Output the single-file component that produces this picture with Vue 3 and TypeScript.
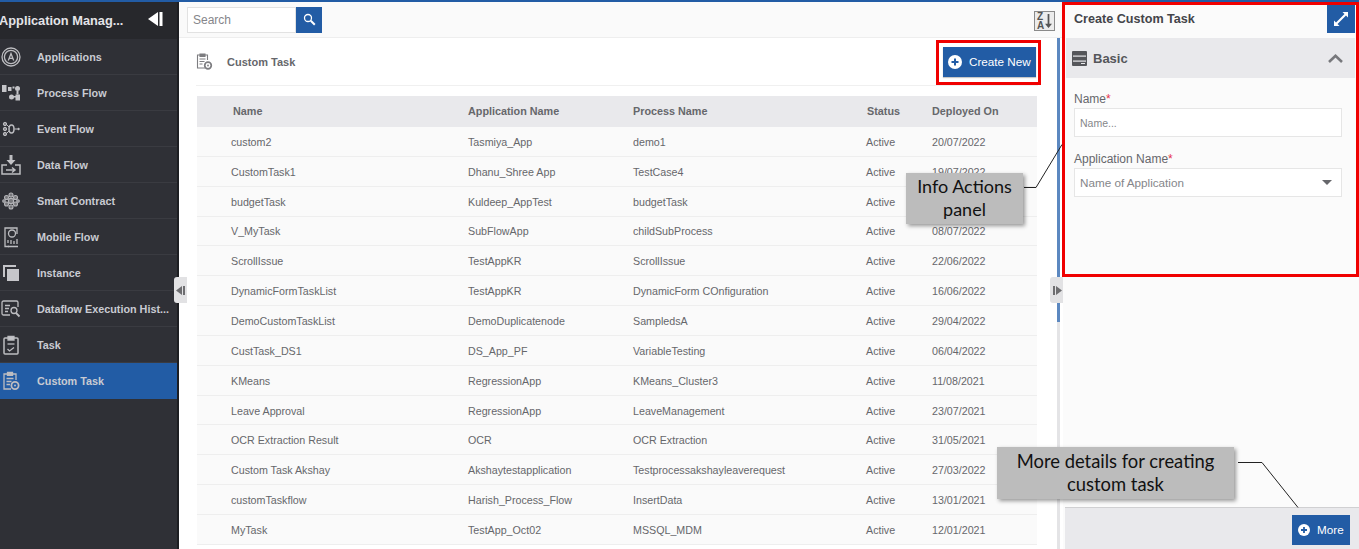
<script setup lang="ts">
// Custom Task screen: sidebar, task table, create panel and the two annotation callouts
interface TaskRow {
  name: string
  app: string
  process: string
  deployed: string
}

const menu = [
  { label: 'Applications', icon: 'apps' },
  { label: 'Process Flow', icon: 'process' },
  { label: 'Event Flow', icon: 'event' },
  { label: 'Data Flow', icon: 'data' },
  { label: 'Smart Contract', icon: 'contract' },
  { label: 'Mobile Flow', icon: 'mobile' },
  { label: 'Instance', icon: 'instance' },
  { label: 'Dataflow Execution Hist...', icon: 'history' },
  { label: 'Task', icon: 'task' },
  { label: 'Custom Task', icon: 'custom' },
]

const rows: TaskRow[] = [
  { name: 'custom2', app: 'Tasmiya_App', process: 'demo1', deployed: '20/07/2022' },
  { name: 'CustomTask1', app: 'Dhanu_Shree App', process: 'TestCase4', deployed: '19/07/2022' },
  { name: 'budgetTask', app: 'Kuldeep_AppTest', process: 'budgetTask', deployed: '14/07/2022' },
  { name: 'V_MyTask', app: 'SubFlowApp', process: 'childSubProcess', deployed: '08/07/2022' },
  { name: 'ScrollIssue', app: 'TestAppKR', process: 'ScrollIssue', deployed: '22/06/2022' },
  { name: 'DynamicFormTaskList', app: 'TestAppKR', process: 'DynamicForm COnfiguration', deployed: '16/06/2022' },
  { name: 'DemoCustomTaskList', app: 'DemoDuplicatenode', process: 'SampledsA', deployed: '29/04/2022' },
  { name: 'CustTask_DS1', app: 'DS_App_PF', process: 'VariableTesting', deployed: '06/04/2022' },
  { name: 'KMeans', app: 'RegressionApp', process: 'KMeans_Cluster3', deployed: '11/08/2021' },
  { name: 'Leave Approval', app: 'RegressionApp', process: 'LeaveManagement', deployed: '23/07/2021' },
  { name: 'OCR Extraction Result', app: 'OCR', process: 'OCR Extraction', deployed: '31/05/2021' },
  { name: 'Custom Task Akshay', app: 'Akshaytestapplication', process: 'Testprocessakshayleaverequest', deployed: '27/03/2022' },
  { name: 'customTaskflow', app: 'Harish_Process_Flow', process: 'InsertData', deployed: '13/01/2021' },
  { name: 'MyTask', app: 'TestApp_Oct02', process: 'MSSQL_MDM', deployed: '12/01/2021' },
]
</script>

<template>
  <div class="page">
    <div class="topline"></div>
    <div class="shell">
      <aside class="sidebar">
        <div class="side-head">
          <span class="side-title">Application Manag...</span>
          <svg class="side-toggle" width="16" height="14" viewBox="0 0 16 14">
            <path d="M1 7 11 0v14z" fill="#fff" />
            <rect x="12.500" y="0" width="3" height="14" fill="#fff" />
          </svg>
        </div>
        <div
          v-for="item in menu"
          :key="item.label"
          class="side-item"
          :class="{ active: item.icon === 'custom' }"
        >
          <svg class="side-icon" width="22" height="22" viewBox="0 0 22 22" fill="none" stroke="#bdbdc1" stroke-width="1.3">
            <template v-if="item.icon === 'apps'">
              <circle cx="11" cy="11" r="9" />
              <circle cx="11" cy="11" r="6.600" />
              <path d="M8.300 14.500 11 7.500l2.700 7M9.200 12.400h3.600" />
            </template>
            <template v-else-if="item.icon === 'process'">
              <g fill="#c4c4c8" stroke="none">
                <rect x="2" y="3" width="4.500" height="7" />
                <rect x="8" y="5" width="3.500" height="4" />
                <rect x="12.500" y="4.500" width="2" height="2" />
                <rect x="15" y="4" width="5" height="5" rx="2.500" />
                <rect x="9" y="12.500" width="5" height="5" rx="2.500" />
                <rect x="15.500" y="12.500" width="4.500" height="6" />
                <rect x="16.500" y="9" width="2" height="3.500" />
                <rect x="13" y="14" width="3" height="1.500" />
              </g>
            </template>
            <template v-else-if="item.icon === 'event'">
              <g fill="#8e8e92" stroke="#bdbdc1" stroke-width="1">
                <circle cx="5" cy="6" r="1.700" />
                <circle cx="5" cy="11" r="1.700" />
                <circle cx="5" cy="16" r="1.700" />
              </g>
              <path d="M6.500 6.500 9 9M6.500 15.500 9 13" stroke-width="1" />
              <ellipse cx="11.500" cy="11" rx="2.500" ry="4" stroke-width="1.500" />
              <path d="M14.500 11h3" stroke-width="1" />
              <circle cx="18.500" cy="11" r="1.200" fill="#bdbdc1" stroke="none" />
            </template>
            <template v-else-if="item.icon === 'data'">
              <path d="M11 1v6" stroke-width="3" />
              <path d="M6.500 6h9L11 11z" fill="#c4c4c8" stroke="none" />
              <path d="M7 11H2v9h18v-9h-5" stroke-width="1.500" />
              <path d="M6 16h9M12 13.500l3 2.500-3 2.500" stroke-width="1.500" />
            </template>
            <template v-else-if="item.icon === 'contract'">
              <g fill="#77777b" stroke="#b4b4b8" stroke-width="1.100">
                <circle cx="11" cy="5" r="2" />
                <circle cx="6.500" cy="7.500" r="2" />
                <circle cx="15.500" cy="7.500" r="2" />
                <circle cx="6.500" cy="14" r="2" />
                <circle cx="15.500" cy="14" r="2" />
                <circle cx="11" cy="17" r="2" />
                <circle cx="11" cy="11" r="2.600" />
                <circle cx="4" cy="11" r="1.300" />
                <circle cx="18" cy="11" r="1.300" />
              </g>
            </template>
            <template v-else-if="item.icon === 'mobile'">
              <path d="M9 20.500H5V2h12v6" />
              <circle cx="12" cy="7.500" r="3.500" />
              <path d="M8 17v-3M11 18v-4M14 18v-3M17 18v-5M8 20.500h10" />
            </template>
            <template v-else-if="item.icon === 'instance'">
              <path d="M3 15V3h13v2H5v10z" fill="#c4c4c8" stroke="none" />
              <rect x="7" y="7" width="12" height="12" fill="#c6c6ca" stroke="none" />
            </template>
            <template v-else-if="item.icon === 'history'">
              <path d="M10 17H3.500A1.500 1.500 0 0 1 2 15.500v-11A1.500 1.500 0 0 1 3.500 3h13A1.500 1.500 0 0 1 18 4.500V9" />
              <path d="M5 7.500h5M5 10.500h4M5 13.500h3" />
              <circle cx="14" cy="12.500" r="3" />
              <path d="m16 15 3.500 3.500" stroke-width="1.800" />
            </template>
            <template v-else-if="item.icon === 'task'">
              <rect x="4" y="4" width="14" height="16" rx="1" stroke-width="1.500" />
              <path d="M8 2.500h6V6H8z" fill="#c4c4c8" />
              <path d="M7.500 10h7" />
              <path d="m7.500 15 2 2 4.500-3.500" />
            </template>
            <template v-else>
              <path d="M11 19H4V4h12v6" />
              <path d="M7.500 2.500h5v2.800h-5z" fill="#bdbdc1" />
              <path d="M6.500 8.500h7M6.500 11.500h5M6.500 14.500h3.500" />
              <circle cx="15" cy="15.500" r="3.600" stroke-width="1.800" />
              <circle cx="15" cy="15.500" r="1" fill="#bdbdc1" stroke="none" />
            </template>
          </svg>
          <span class="side-label">{{ item.label }}</span>
        </div>
      </aside>

      <main class="main">
        <div class="toolbar">
          <div class="search">
            <span class="search-input">Search</span>
            <span class="search-btn">
              <svg width="13" height="13" viewBox="0 0 13 13" fill="none" stroke="#fff">
                <circle cx="5" cy="5" r="3.500" stroke-width="1.300" />
                <path d="m7.800 7.800 4 4" stroke-width="2" />
              </svg>
            </span>
          </div>
          <span class="sort-btn">
            <span class="sort-letters">Z<br />A</span>
            <svg width="7" height="16" viewBox="0 0 8 16">
              <path d="M3 0h2v11h3l-4 5-4-5h3z" fill="#555" />
            </svg>
          </span>
        </div>

        <div class="content">
          <div class="list">
            <div class="list-head">
              <span class="list-title">
                <svg width="17" height="19" viewBox="0 0 17 19" fill="none" stroke="#7d7d80" stroke-width="1.100">
                  <path d="M9 16H1.500V3h10v5" />
                  <path d="M4 2h5v2.500H4z" fill="#7d7d80" />
                  <path d="M3.500 7h6M3.500 9.500h5M3.500 12h3" />
                  <circle cx="12" cy="13.500" r="3.300" stroke-width="1.700" />
                  <circle cx="12" cy="13.500" r="0.900" fill="#7d7d80" stroke="none" />
                </svg>
                <span>Custom Task</span>
              </span>
              <button class="primary create">
                <svg width="14" height="14" viewBox="0 0 14 14">
                  <circle cx="7" cy="7" r="7" fill="#fff" />
                  <path d="M7 3.500v7M3.500 7h7" stroke="#225ca5" stroke-width="2" />
                </svg>
                Create New
              </button>
            </div>
            <div class="table">
              <div class="t-row t-header">
                <span class="h-name">Name</span>
                <span>Application Name</span>
                <span>Process Name</span>
                <span class="h-status">Status</span>
                <span>Deployed On</span>
              </div>
              <div v-for="row in rows" :key="row.name" class="t-row">
                <span>{{ row.name }}</span>
                <span>{{ row.app }}</span>
                <span>{{ row.process }}</span>
                <span>Active</span>
                <span>{{ row.deployed }}</span>
              </div>
            </div>
          </div>
          <div class="scroll-track"><div class="scroll-thumb"></div></div>
        </div>
        <span class="handle handle-left">
          <svg width="10" height="9" viewBox="0 0 10 9"><path d="M6 0v9L0 4.500z" fill="#6d6d70" /><rect x="7" width="2" height="9" fill="#6d6d70" /></svg>
        </span>
        <span class="handle handle-right">
          <svg width="10" height="9" viewBox="0 0 10 9"><rect x="1" width="2" height="9" fill="#6d6d70" /><path d="M4 0v9l6-4.500z" fill="#6d6d70" /></svg>
        </span>
      </main>

      <section class="panel">
        <div class="panel-head">
          <span class="panel-title">Create Custom Task</span>
          <span class="expand">
            <svg width="14" height="14" viewBox="0 0 14 14" fill="#fff">
              <path d="M8.500 0H14v5.500l-2-2-8.500 8.500 2 2H0V8.500l2 2L10.500 2z" />
            </svg>
          </span>
        </div>
        <div class="section-bar">
          <span class="section-name">
            <svg width="15" height="15" viewBox="0 0 15 15">
              <rect width="15" height="15" rx="1" fill="#55565a" />
              <rect x="1" y="4.500" width="13" height="1.200" fill="#e9e9ec" />
              <rect x="1" y="9.500" width="13" height="1.200" fill="#e9e9ec" />
              <rect x="9" y="12" width="4" height="1" fill="#e9e9ec" />
            </svg>
            Basic
          </span>
          <svg width="15" height="9" viewBox="0 0 15 9" fill="none" stroke="#77787c" stroke-width="2.600">
            <path d="m1 8 6.500-6.200L14 8" />
          </svg>
        </div>
        <div class="form">
          <label class="field-label">Name<em>*</em></label>
          <div class="field">Name...</div>
          <label class="field-label second">Application Name<em>*</em></label>
          <div class="field select">
            <span>Name of Application</span>
            <i class="caret"></i>
          </div>
        </div>
        <div class="panel-foot">
          <button class="primary more">
            <svg width="12" height="12" viewBox="0 0 12 12">
              <circle cx="6" cy="6" r="6" fill="#fff" />
              <path d="M6 3v6M3 6h6" stroke="#225ca5" stroke-width="1.800" />
            </svg>
            More
          </button>
        </div>
      </section>
    </div>

    <!-- annotations painted over the screenshot -->
    <div class="red-box box-create"></div>
    <div class="red-box box-panel"></div>
    <svg class="leaders" width="1359" height="549" fill="none" stroke="#222" stroke-width="1">
      <path d="M1024 187.500h12l26-43" />
      <path d="M1238 462.500h24l36 45" />
    </svg>
    <div class="callout callout-info">Info Actions<br />panel</div>
    <div class="callout callout-more">More details for creating<br />custom task</div>
  </div>
</template>

<style scoped>
.page {
  position: relative;
  display: flex;
  flex-direction: column;
  width: 1359px;
  height: 549px;
  overflow: hidden;
  background: #fff;
  font-family: 'Liberation Sans', Arial, sans-serif;
  font-size: 11px;
  color: #66676b;
}
.topline {
  height: 2px;
  flex: none;
  background: #225ca5;
}
.shell {
  display: flex;
  flex: 1;
  min-height: 0;
}

.sidebar {
  flex: none;
  width: 177px;
  background: #2f3036;
  border-right: 2px solid #1d1e22;
}
.side-head {
  display: flex;
  align-items: center;
  justify-content: space-between;
  height: 37px;
  padding-right: 14px;
  background: #27282c;
}
.side-title {
  font-size: 12.8px;
  font-weight: 700;
  color: #e4e4e8;
  margin-left: -1px;
  margin-top: -1px;
}
.side-toggle {
  margin-top: -4px;
}
.side-item {
  display: flex;
  align-items: center;
  height: 36px;
  border-bottom: 1px solid #3a3b41;
  box-sizing: border-box;
}
.side-item.active {
  background: #225ca5;
  border-bottom-color: #225ca5;
}
.side-icon {
  flex: none;
  margin: 0 15px 0 0;
}
.side-label {
  font-weight: 700;
  font-size: 10.8px;
  color: #c9cbd2;
  white-space: nowrap;
}

.main {
  position: relative;
  flex: none;
  width: 884px;
  display: flex;
  flex-direction: column;
  min-height: 0;
}
.toolbar {
  flex: none;
  display: flex;
  align-items: center;
  justify-content: space-between;
  height: 36px;
  padding: 0 8px;
  background: #fafafa;
  border-bottom: 1px solid #eeeeee;
  box-sizing: border-box;
}
.search {
  display: flex;
  height: 26px;
}
.search-input {
  width: 109px;
  line-height: 24px;
  padding-left: 5px;
  box-sizing: border-box;
  background: #fff;
  border: 1px solid #e2e2e2;
  font-size: 12px;
  color: #85868a;
}
.search-btn {
  display: flex;
  align-items: center;
  justify-content: center;
  width: 26px;
  background: #225ca5;
}
.sort-btn {
  display: flex;
  align-items: center;
  gap: 1px;
  width: 21px;
  height: 20px;
  padding-left: 2px;
  box-sizing: border-box;
  background: #ececec;
  border: 1px solid #8a8a8a;
  margin-top: 2px;
}
.sort-letters {
  font-size: 10px;
  font-weight: 700;
  line-height: 9px;
  color: #555;
}
.content {
  flex: 1;
  display: flex;
  min-height: 0;
  padding-left: 18px;
}
.list {
  width: 840px;
  flex: none;
}
.list-head {
  display: flex;
  align-items: center;
  justify-content: space-between;
  height: 48px;
  margin-left: -1px;
  margin-right: -1px;
  padding-right: 1px;
  box-sizing: border-box;
  border-bottom: 1px solid #f0f0f0;
}
.list-title {
  display: flex;
  align-items: center;
  gap: 14px;
  font-weight: 700;
  color: #66676b;
}
.primary {
  display: inline-flex;
  align-items: center;
  border: 0;
  background: #225ca5;
  color: #fff;
  font-family: inherit;
  font-size: 11.7px;
}
.create {
  width: 93px;
  height: 30px;
  gap: 7px;
  padding: 0 0 0 5px;
  margin-right: 1px;
  box-shadow: 0 1px 1px #c8c8c8;
}
.table {
  margin-top: 10px;
}
.t-row {
  display: grid;
  grid-template-columns: 237px 165px 233px 66px 1fr;
  align-items: center;
  height: 29.85px;
  padding: 1px 0 0 34px;
  box-sizing: border-box;
  background: #fafafa;
  border-bottom: 1px solid #eeeeee;
  font-size: 10.7px;
  white-space: nowrap;
}
.t-header {
  height: 31px;
  padding: 0 0 1px 34px;
  background: #e9e9ec;
  border-bottom: 0;
  font-weight: 700;
  font-size: 10.8px;
  color: #66676b;
}
.h-name {
  padding-left: 2px;
}
.h-status {
  padding-left: 1px;
}
.scroll-track {
  flex: none;
  width: 3px;
  margin-left: 20px;
  background: #e4e4e6;
}
.scroll-thumb {
  height: 284px;
  background: #5c88c0;
}
.handle {
  position: absolute;
  top: 275px;
  display: flex;
  align-items: center;
  justify-content: center;
  width: 13px;
  height: 26px;
  background: #e2e2e4;
}
.handle-left {
  left: -5px;
  border-radius: 3px 0 0 3px;
}
.handle-right {
  right: 0;
  border-radius: 3px 0 0 3px;
}

.panel {
  flex: 1;
  display: flex;
  flex-direction: column;
  min-width: 0;
  background: #fbfbfb;
}
.panel-head {
  display: flex;
  align-items: flex-start;
  justify-content: space-between;
  height: 36px;
  padding: 0 4px 0 11px;
  box-sizing: border-box;
}
.panel-title {
  font-size: 12.6px;
  line-height: 34px;
  font-weight: 700;
  color: #44454a;
}
.expand {
  display: flex;
  align-items: center;
  justify-content: center;
  width: 28px;
  height: 28px;
  margin-top: 3px;
  background: #225ca5;
}
.section-bar {
  display: flex;
  align-items: center;
  justify-content: space-between;
  height: 40px;
  margin: 0 4px 0 3px;
  padding: 0 12px 0 6px;
  background: #e9e9ec;
}
.section-name {
  display: flex;
  align-items: center;
  gap: 6px;
  font-size: 13px;
  font-weight: 700;
  color: #55565a;
}
.form {
  flex: 1;
  padding: 14px 17px 0 11px;
}
.field-label {
  display: block;
  font-size: 12px;
  line-height: 14px;
  color: #66676b;
  margin-bottom: 2px;
}
.field-label em {
  color: #e6324b;
  font-style: normal;
}
.second {
  margin-top: 15px;
}
.field {
  height: 29px;
  line-height: 29px;
  padding: 0 5px;
  box-sizing: border-box;
  background: #fff;
  border: 1px solid #e6e6e6;
  font-size: 10.5px;
  color: #85868a;
}
.select {
  display: flex;
  align-items: center;
  justify-content: space-between;
  font-size: 11.7px;
  padding: 0 9px 0 5px;
}
.caret {
  width: 0;
  height: 0;
  border-left: 5px solid transparent;
  border-right: 5px solid transparent;
  border-top: 5px solid #66676b;
}
.panel-foot {
  display: flex;
  justify-content: flex-end;
  align-items: center;
  height: 42px;
  margin-left: 2px;
  padding: 2px 9px 0 0;
  box-sizing: border-box;
  background: #e9e9ec;
  border-top: 1px solid #d0d0d2;
}
.more {
  width: 58px;
  height: 30px;
  gap: 7px;
  padding: 0 0 0 6px;
}

.red-box {
  position: absolute;
  box-sizing: border-box;
  border: 3px solid #f00000;
  pointer-events: none;
}
.box-create {
  left: 936px;
  top: 40px;
  width: 105px;
  height: 45px;
}
.box-panel {
  left: 1062px;
  top: 2px;
  width: 297px;
  height: 275px;
}
.leaders {
  position: absolute;
  left: 0;
  top: 0;
  pointer-events: none;
}
.callout {
  position: absolute;
  box-sizing: border-box;
  background: #bcbcbc;
  box-shadow: 2px 2px 4px rgba(0, 0, 0, 0.4);
  font-family: Lato, 'Open Sans', sans-serif;
  font-size: 18px;
  line-height: 23px;
  color: #111;
  text-align: center;
}
.callout-info {
  left: 906px;
  top: 173px;
  width: 117px;
  height: 51px;
  padding-top: 2px;
}
.callout-more {
  left: 997px;
  top: 447px;
  width: 237px;
  height: 52px;
  padding-top: 3px;
  font-size: 18.4px;
}
</style>
